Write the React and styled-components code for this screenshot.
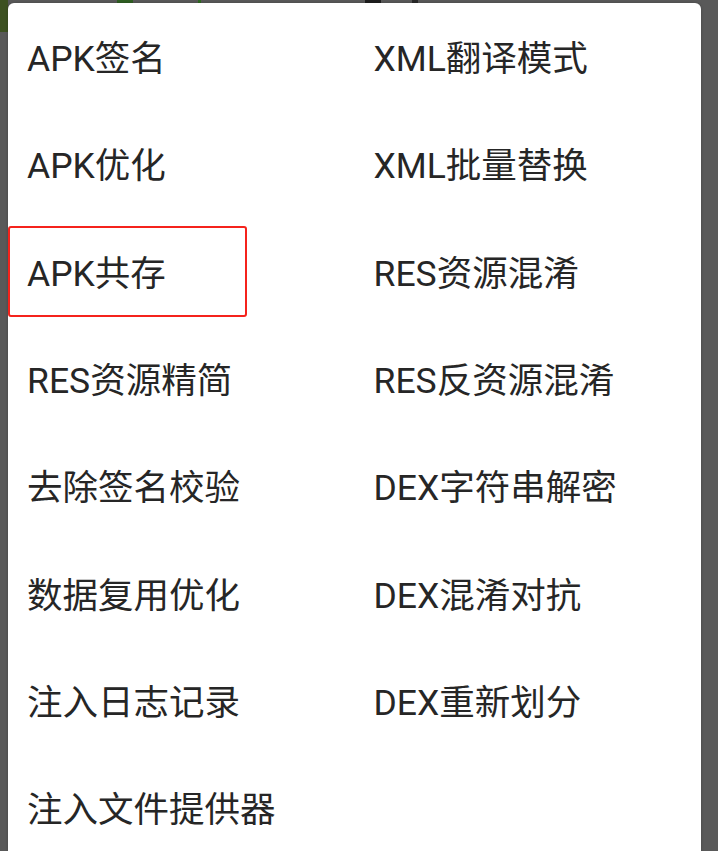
import React from 'react'
import styled, { createGlobalStyle } from 'styled-components'

let GlobalStyle = createGlobalStyle`
  html, body {
    margin: 0;
    padding: 0;
    height: 100%;
    overflow: hidden;
  }
  body {
    background:
      linear-gradient(#3d5121, #3d5121) 0 0 / 8px 32px no-repeat,
      linear-gradient(#2f5e22, #2f5e22) 117px 0 / 16px 3px no-repeat,
      linear-gradient(#2f6a20, #2f6a20) 198px 0 / 3px 3px no-repeat,
      linear-gradient(#1e1e1e, #1e1e1e) 365px 0 / 16px 3px no-repeat,
      linear-gradient(#2a2a2a, #2a2a2a) 412px 0 / 6px 3px no-repeat,
      #595959;
    font-family: Roboto, "Noto Sans CJK SC", "Noto Sans", sans-serif;
  }
`

let Screen = styled.div`
  width: 718px;
  height: 851px;
  padding: 3px 0 0 8px;
  box-sizing: border-box;
`

let Menu = styled.div`
  width: 693px;
  height: 100%;
  background: #fff;
  border-radius: 6px 6px 0 0;
  box-shadow: 0 0 3px rgba(0, 0, 0, 0.25);
  box-sizing: border-box;
  display: grid;
  grid-template-columns: 1fr 1fr;
  grid-auto-rows: 107.3px;
`

let Item = styled.div`
  position: relative;
  display: flex;
  align-items: center;
  padding: 0 0 2px 19px;
  font-size: 35.5px;
  color: #262626;
  white-space: nowrap;
`

let Highlight = styled.span`
  position: absolute;
  left: 0;
  top: 8px;
  width: 239px;
  height: 91px;
  box-sizing: border-box;
  border: 2px solid #f5231c;
  border-radius: 3px;
  pointer-events: none;
`

let items = [
  ['APK签名', 'XML翻译模式'],
  ['APK优化', 'XML批量替换'],
  ['APK共存', 'RES资源混淆'],
  ['RES资源精简', 'RES反资源混淆'],
  ['去除签名校验', 'DEX字符串解密'],
  ['数据复用优化', 'DEX混淆对抗'],
  ['注入日志记录', 'DEX重新划分'],
  ['注入文件提供器', '']
]

export default function App() {
  return (
    <Screen>
      <GlobalStyle />
      <Menu>
        {items.flat().map((label, i) => (
          <Item key={i}>
            {label === 'APK共存' && <Highlight />}
            {label}
          </Item>
        ))}
      </Menu>
    </Screen>
  )
}
